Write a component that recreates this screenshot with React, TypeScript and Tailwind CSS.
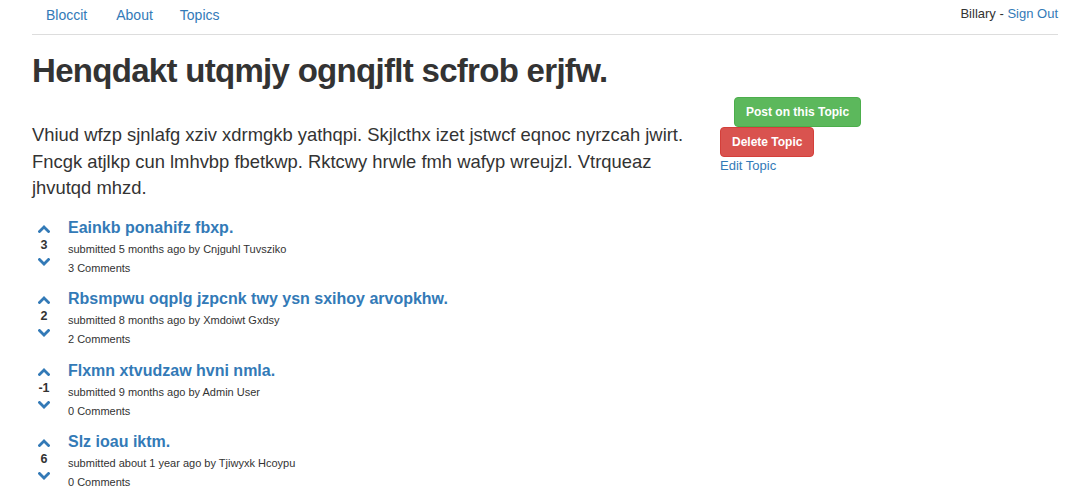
const posts = [
  { votes: 3, title: 'Eainkb ponahifz fbxp.', meta: 'submitted 5 months ago by Cnjguhl Tuvsziko', comments: '3 Comments' },
  { votes: 2, title: 'Rbsmpwu oqplg jzpcnk twy ysn sxihoy arvopkhw.', meta: 'submitted 8 months ago by Xmdoiwt Gxdsy', comments: '2 Comments' },
  { votes: -1, title: 'Flxmn xtvudzaw hvni nmla.', meta: 'submitted 9 months ago by Admin User', comments: '0 Comments' },
  { votes: 6, title: 'Slz ioau iktm.', meta: 'submitted about 1 year ago by Tjiwyxk Hcoypu', comments: '0 Comments' },
];

function Chevron({ down = false }: { down?: boolean }) {
  return (
    <svg width="12" height="8" viewBox="0 0 12 8" className="block">
      <polyline
        points={down ? '1.5,1.5 6,6 10.5,1.5' : '1.5,6.5 6,2 10.5,6.5'}
        fill="none"
        stroke="#337ab7"
        strokeWidth="2.8"
        strokeLinecap="square"
      />
    </svg>
  );
}

export default function App() {
  return (
    <div className="w-[1078px] h-[502px] overflow-hidden bg-white text-[#333] font-['Liberation_Sans',Arial,sans-serif]">
      {/* Nav */}
      <div className="ml-[32px] mr-[20px] h-[35px] border-b border-[#ddd] flex items-start justify-between">
        <ul className="flex text-[14px] text-[#337ab7] leading-[20px] pt-[5px]">
          <li className="pl-[14px] pr-[15px]">Bloccit</li>
          <li className="pl-[14px] pr-[14px]">About</li>
          <li className="pl-[13px]">Topics</li>
        </ul>
        <div className="text-[13px] leading-[20px] pt-[4px]">
          Billary - <span className="text-[#337ab7]">Sign Out</span>
        </div>
      </div>

      <div className="px-[32px]">
        <h1 className="text-[33px] font-bold leading-[40px] mt-[16px] tracking-[-0.7px]">
          Henqdakt utqmjy ognqjflt scfrob erjfw.
        </h1>

        <div className="flex mt-[6px]">
          <p className="w-[666px] text-[18.4px] leading-[26.5px] mt-[25px]">
            Vhiud wfzp sjnlafg xziv xdrmgkb yathqpi. Skjlcthx izet jstwcf eqnoc nyrzcah jwirt. Fncgk atjlkp cun lmhvbp fbetkwp. Rktcwy hrwle fmh wafyp wreujzl. Vtrqueaz jhvutqd mhzd.
          </p>
          <div className="ml-[22px] flex flex-col items-start">
            <button className="ml-[14px] h-[30px] px-[11px] rounded-[4px] bg-[#5cb85c] border border-[#4cae4c] text-white text-[12px] font-bold">
              Post on this Topic
            </button>
            <button className="h-[30px] px-[11px] rounded-[4px] bg-[#d9534f] border border-[#d43f3a] text-white text-[12px] font-bold">
              Delete Topic
            </button>
            <span className="text-[13px] leading-[18px] text-[#337ab7]">Edit Topic</span>
          </div>
        </div>

        <div className="mt-[15px]">
          {posts.map((post, i) => (
            <div key={i} className="flex h-[71.5px]">
              <div className="w-[24px] flex flex-col items-center pt-[8px]">
                <Chevron />
                <div className="h-[25px] text-[12.5px] font-bold leading-[25px]">{post.votes}</div>
                <Chevron down />
              </div>
              <div className="ml-[12px]">
                <div className="text-[16px] font-bold leading-[22px] text-[#337ab7]">{post.title}</div>
                <div className="text-[11px] leading-[20px]">{post.meta}</div>
                <div className="text-[11px] leading-[18px]">{post.comments}</div>
              </div>
            </div>
          ))}
        </div>
      </div>
    </div>
  );
}
